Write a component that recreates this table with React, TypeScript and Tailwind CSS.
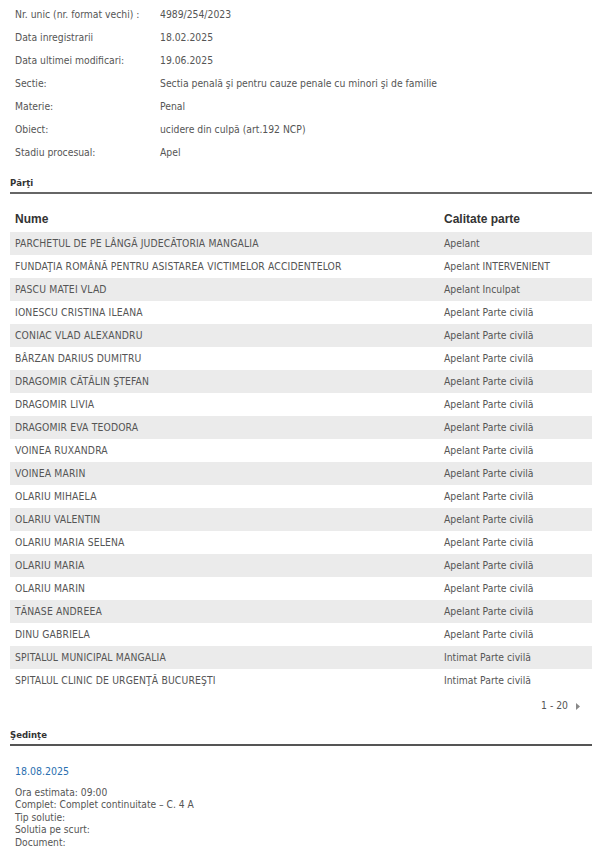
import React from 'react';

interface Parte {
  nume: string;
  calitate: string;
}

const details: [string, string][] = [
  ['Nr. unic (nr. format vechi) :', '4989/254/2023'],
  ['Data inregistrarii', '18.02.2025'],
  ['Data ultimei modificari:', '19.06.2025'],
  ['Sectie:', 'Sectia penală şi pentru cauze penale cu minori şi de familie'],
  ['Materie:', 'Penal'],
  ['Obiect:', 'ucidere din culpă (art.192 NCP)'],
  ['Stadiu procesual:', 'Apel'],
];

const parti: Parte[] = [
  { nume: 'PARCHETUL DE PE LÂNGĂ JUDECĂTORIA MANGALIA', calitate: 'Apelant' },
  { nume: 'FUNDAŢIA ROMÂNĂ PENTRU ASISTAREA VICTIMELOR ACCIDENTELOR', calitate: 'Apelant INTERVENIENT' },
  { nume: 'PASCU MATEI VLAD', calitate: 'Apelant Inculpat' },
  { nume: 'IONESCU CRISTINA ILEANA', calitate: 'Apelant Parte civilă' },
  { nume: 'CONIAC VLAD ALEXANDRU', calitate: 'Apelant Parte civilă' },
  { nume: 'BÂRZAN DARIUS DUMITRU', calitate: 'Apelant Parte civilă' },
  { nume: 'DRAGOMIR CĂTĂLIN ŞTEFAN', calitate: 'Apelant Parte civilă' },
  { nume: 'DRAGOMIR LIVIA', calitate: 'Apelant Parte civilă' },
  { nume: 'DRAGOMIR EVA TEODORA', calitate: 'Apelant Parte civilă' },
  { nume: 'VOINEA RUXANDRA', calitate: 'Apelant Parte civilă' },
  { nume: 'VOINEA MARIN', calitate: 'Apelant Parte civilă' },
  { nume: 'OLARIU MIHAELA', calitate: 'Apelant Parte civilă' },
  { nume: 'OLARIU VALENTIN', calitate: 'Apelant Parte civilă' },
  { nume: 'OLARIU MARIA SELENA', calitate: 'Apelant Parte civilă' },
  { nume: 'OLARIU MARIA', calitate: 'Apelant Parte civilă' },
  { nume: 'OLARIU MARIN', calitate: 'Apelant Parte civilă' },
  { nume: 'TĂNASE ANDREEA', calitate: 'Apelant Parte civilă' },
  { nume: 'DINU GABRIELA', calitate: 'Apelant Parte civilă' },
  { nume: 'SPITALUL MUNICIPAL MANGALIA', calitate: 'Intimat Parte civilă' },
  { nume: 'SPITALUL CLINIC DE URGENŢĂ BUCUREŞTI', calitate: 'Intimat Parte civilă' },
];

const App: React.FC = () => {
  return (
    <div className="w-[602px] min-h-[855px] bg-white text-[10.3px] text-[#555] font-['DejaVu_Sans_Condensed','DejaVu_Sans',sans-serif] pt-[3px] px-[10px]">
      {/* Detalii dosar */}
      <div className="flex flex-col">
        {details.map(([label, value]) => (
          <div key={label} className="flex h-[23px] items-center pl-[5px]">
            <span className="w-[145px] shrink-0">{label}</span>
            <span>{value}</span>
          </div>
        ))}
      </div>

      {/* Parti */}
      <div className="mt-[13px] border-b-2 border-[#666] pb-[3px] leading-[12px] font-bold text-[#333] text-[9.5px]">Părţi</div>

      <div className="mt-[17px] flex h-[16px] items-center pl-[5px] font-['Liberation_Sans',sans-serif] font-bold text-[12px] text-[#333]">
        <span className="w-[429px] shrink-0">Nume</span>
        <span>Calitate parte</span>
      </div>

      <div className="mt-[5px] flex flex-col">
        {parti.map((p, i) => (
          <div
            key={p.nume}
            className={`flex h-[23px] items-center pl-[5px] tracking-[0.15px] ${i % 2 === 0 ? 'bg-[#ebebeb]' : 'bg-white'}`}
          >
            <span className="w-[429px] shrink-0">{p.nume}</span>
            <span className="tracking-normal">{p.calitate}</span>
          </div>
        ))}
      </div>

      <div className="mt-[7px] flex h-[14px] items-center justify-end gap-[8px] pr-[12px] text-[#555]">
        <span>1 - 20</span>
        <svg width="4" height="7" viewBox="0 0 4 7">
          <path d="M0 0 L4 3.5 L0 7 Z" fill="#888" />
        </svg>
      </div>

      {/* Sedinte */}
      <div className="mt-[16px] border-b-2 border-[#555] pb-[3px] leading-[12px] font-bold text-[#333] text-[9.5px]">Şedinţe</div>

      <div className="mt-[17px] pl-[5px] text-[10.5px] leading-[16.5px] text-[#2a6fb0]">18.08.2025</div>

      <div className="mt-[7px] pl-[5px] leading-[12.5px] text-[10.2px] text-[#555]">
        <div>Ora estimata: 09:00</div>
        <div>Complet: Complet continuitate – C. 4 A</div>
        <div>Tip solutie:</div>
        <div>Solutia pe scurt:</div>
        <div>Document:</div>
      </div>
    </div>
  );
};

export default App;
